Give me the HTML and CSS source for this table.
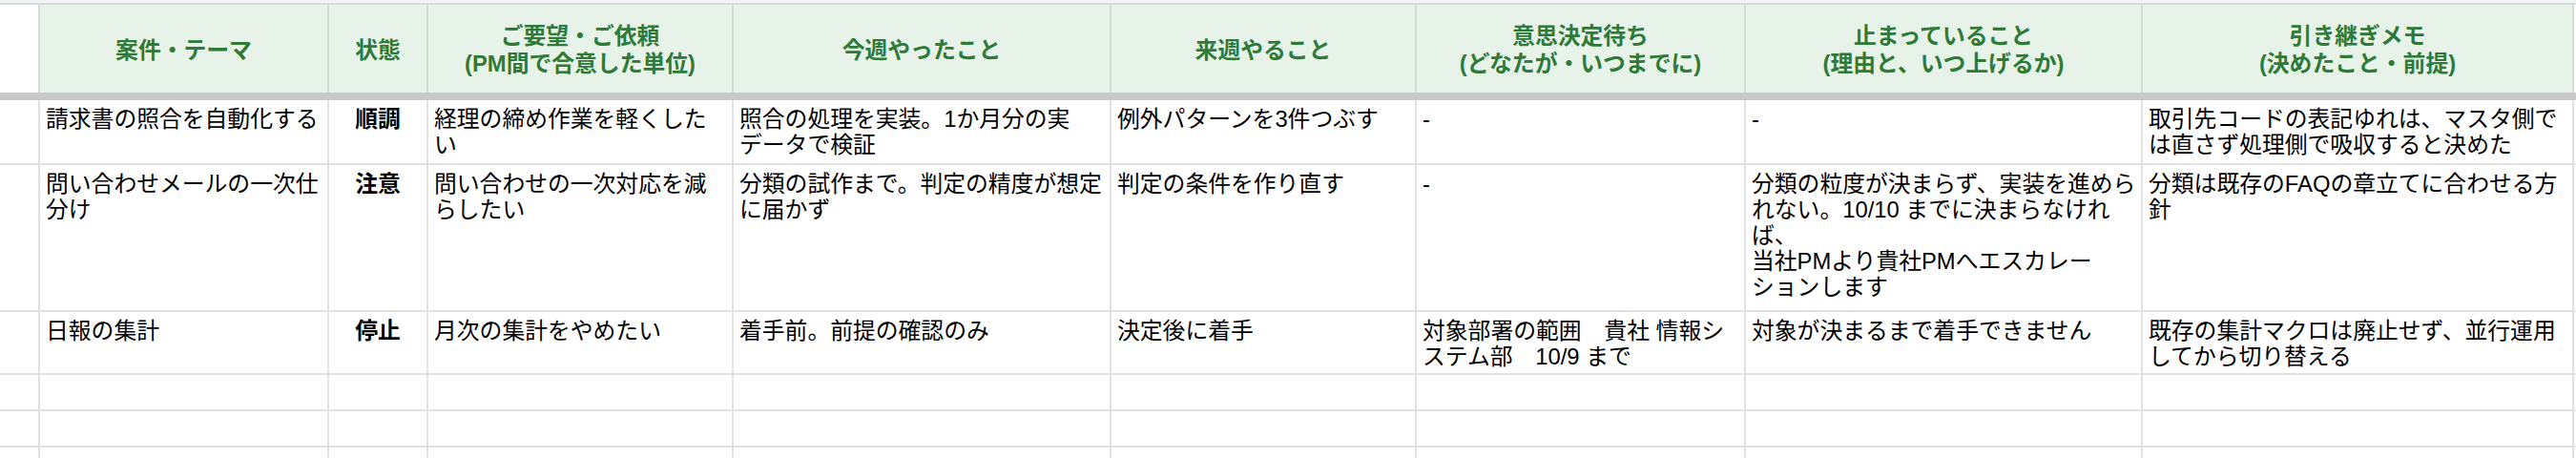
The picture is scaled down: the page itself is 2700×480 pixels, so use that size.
FILE: index.html
```html
<!DOCTYPE html>
<html lang="ja">
<head>
<meta charset="utf-8">
<title>週次報告</title>
<link rel="stylesheet" href="styles.css">
</head>
<body>
<div class="sheet">
  <div class="topbar"></div>
  <div class="grid head">
    <div class="rh"></div>
    <div class="hd">案件・テーマ</div>
    <div class="hd">状態</div>
    <div class="hd">ご要望・ご依頼<br>(PM間で合意した単位)</div>
    <div class="hd">今週やったこと</div>
    <div class="hd">来週やること</div>
    <div class="hd">意思決定待ち<br>(どなたが・いつまでに)</div>
    <div class="hd">止まっていること<br>(理由と、いつ上げるか)</div>
    <div class="hd">引き継ぎメモ<br>(決めたこと・前提)</div>
    <div class="hd blank"></div>
  </div>
  <div class="freeze"></div>
  <div class="grid body">
    <div class="rh"></div>
    <div class="c">請求書の照合を自動化する</div>
    <div class="c st">順調</div>
    <div class="c">経理の締め作業を軽くした<br>い</div>
    <div class="c">照合の処理を実装。1か月分の実<br>データで検証</div>
    <div class="c">例外パターンを3件つぶす</div>
    <div class="c">-</div>
    <div class="c">-</div>
    <div class="c">取引先コードの表記ゆれは、マスタ側で<br>は直さず処理側で吸収すると決めた</div>
    <div class="c"></div>

    <div class="rh"></div>
    <div class="c">問い合わせメールの一次仕<br>分け</div>
    <div class="c st">注意</div>
    <div class="c">問い合わせの一次対応を減<br>らしたい</div>
    <div class="c">分類の試作まで。判定の精度が想定<br>に届かず</div>
    <div class="c">判定の条件を作り直す</div>
    <div class="c">-</div>
    <div class="c">分類の粒度が決まらず、実装を進めら<br>れない。10/10 までに決まらなけれ<br>ば、<br>当社PMより貴社PMへエスカレー<br>ションします</div>
    <div class="c">分類は既存のFAQの章立てに合わせる方<br>針</div>
    <div class="c"></div>

    <div class="rh"></div>
    <div class="c">日報の集計</div>
    <div class="c st">停止</div>
    <div class="c">月次の集計をやめたい</div>
    <div class="c">着手前。前提の確認のみ</div>
    <div class="c">決定後に着手</div>
    <div class="c">対象部署の範囲　貴社 情報シ<br>ステム部　10/9 まで</div>
    <div class="c">対象が決まるまで着手できません</div>
    <div class="c">既存の集計マクロは廃止せず、並行運用<br>してから切り替える</div>
    <div class="c"></div>

    <div class="rh"></div><div class="c"></div><div class="c"></div><div class="c"></div><div class="c"></div><div class="c"></div><div class="c"></div><div class="c"></div><div class="c"></div><div class="c"></div>
    <div class="rh"></div><div class="c"></div><div class="c"></div><div class="c"></div><div class="c"></div><div class="c"></div><div class="c"></div><div class="c"></div><div class="c"></div><div class="c"></div>
    <div class="rh"></div><div class="c"></div><div class="c"></div><div class="c"></div><div class="c"></div><div class="c"></div><div class="c"></div><div class="c"></div><div class="c"></div><div class="c"></div>
  </div>
</div>
</body>
</html>
```

FILE: styles.css
```css
html, body {
  margin: 0;
  padding: 0;
  background: #ffffff;
}
body {
  width: 2700px;
  height: 480px;
  overflow: hidden;
  font-family: "Liberation Sans", "Noto Sans CJK JP", sans-serif;
  font-size: 23.8px;
  color: #000000;
}
.sheet {
  width: 2700px;
  overflow: hidden;
}
.topbar {
  height: 3px;
  background: #f1f3f4;
}
.grid {
  display: grid;
  grid-template-columns: 40px 301px 102px 318px 394px 318px 343px 414px 450px 200px;
  column-gap: 2px;
  row-gap: 2px;
  width: max-content;
}
.head {
  padding-top: 2px;
  background: #d3ddd5;
  grid-template-rows: 92px;
}
.hd {
  background: #e7f2e9;
  color: #2f7a38;
  font-weight: 700;
  line-height: 29px;
  text-align: center;
  display: flex;
  align-items: center;
  justify-content: center;
  padding-top: 2px;
}
.hd.blank {
  background: #ffffff;
}
.rh {
  background: #ffffff;
}
.freeze {
  height: 8px;
  background: #c8c8c8;
}
.body {
  background: #e1e1e1;
  grid-template-rows: 66px 152px 64px 36px 36px 36px;
}
.c {
  background: #ffffff;
  line-height: 27px;
  padding: 6px 2px 0 6px;
  white-space: nowrap;
  overflow: hidden;
}
.st {
  font-weight: 700;
  text-align: center;
  padding-left: 2px;
}
```
